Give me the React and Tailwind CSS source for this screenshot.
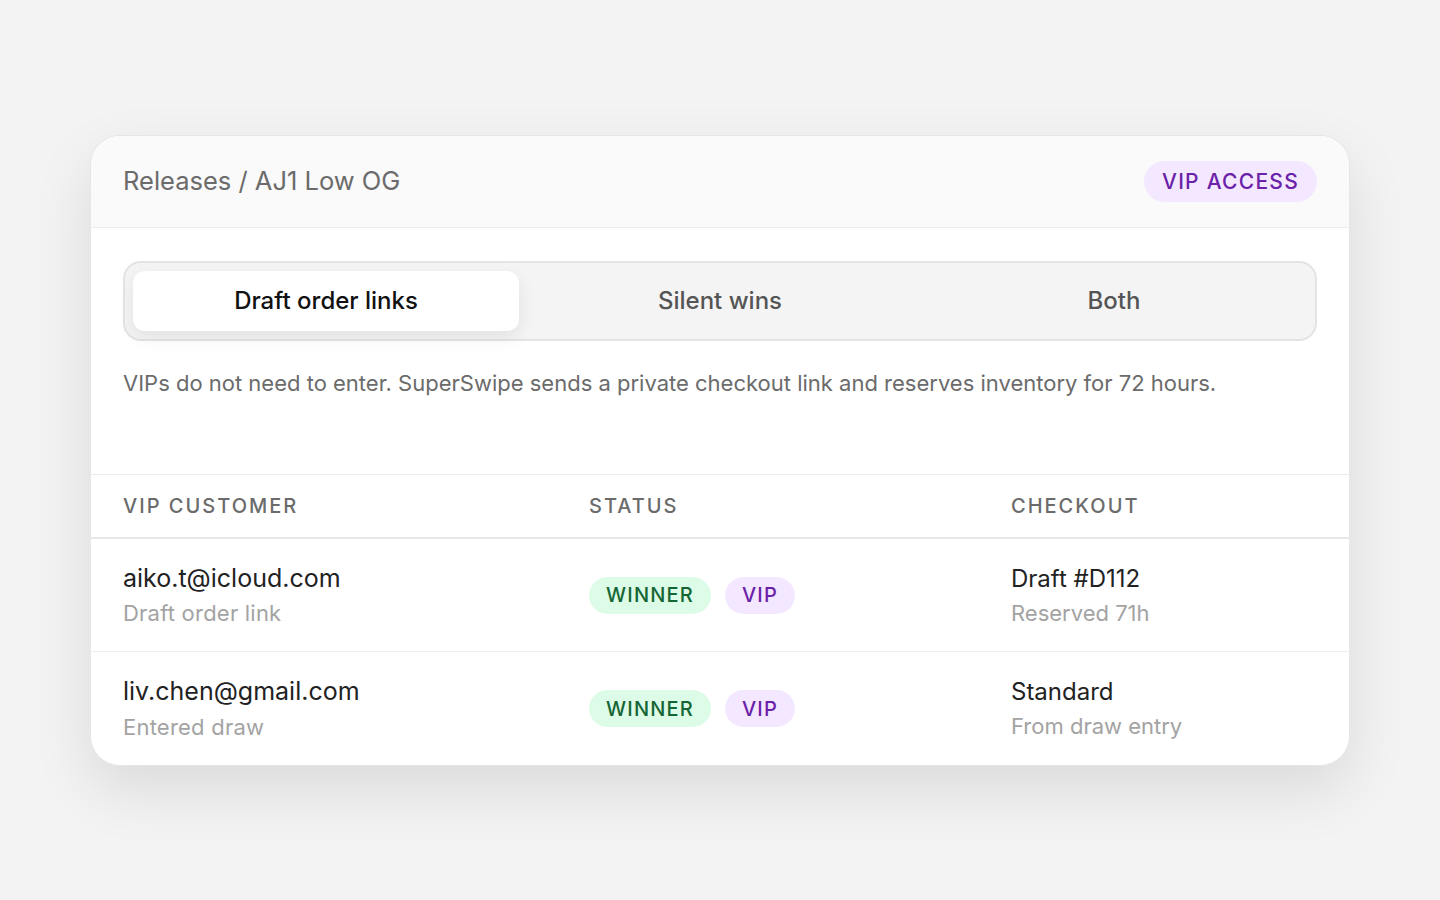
import React from "react";

const rows = [
  { email: "aiko.t@icloud.com", sub: "Draft order link", checkout: "Draft #D112", note: "Reserved 71h" },
  { email: "liv.chen@gmail.com", sub: "Entered draw", checkout: "Standard", note: "From draw entry" },
];

function Pill({ tone, children }) {
  const cls =
    tone === "green"
      ? "bg-[#dcfce7] text-[#166534]"
      : "bg-[#f3e8ff] text-[#6b21a8]";
  return (
    <span className={`inline-flex h-[37px] items-center rounded-full px-[17px] text-[20px] font-medium tracking-[0.06em] ${cls}`}>
      {children}
    </span>
  );
}

export default function App() {
  const tabs = ["Draft order links", "Silent wins", "Both"];
  return (
    <div
      className="flex min-h-[900px] w-full items-start justify-center bg-[#f3f3f3] pt-[135px]"
      style={{ fontFamily: "Inter, 'Noto Sans', sans-serif" }}
    >
      <div className="w-[1260px] overflow-hidden rounded-[30px] border border-[#e6e6e6] bg-white shadow-[0_24px_60px_rgba(0,0,0,0.10)]">
        {/* header */}
        <div className="flex h-[92px] items-center justify-between border-b border-[#ececec] bg-[#fafafa] px-[32px]">
          <div className="text-[25.5px] text-[#6b6b6b]">Releases / AJ1 Low OG</div>
          <span className="inline-flex h-[41px] items-center rounded-full bg-[#f3e8ff] px-[18px] text-[21px] font-medium tracking-[0.06em] text-[#6b21a8]">
            VIP ACCESS
          </span>
        </div>

        {/* mode switch */}
        <div className="px-[32px] pt-[33px]">
          <div className="grid h-[80px] grid-cols-3 gap-[8px] rounded-[18px] border-2 border-[#e4e4e4] bg-[#f4f4f4] p-[8px]">
            {tabs.map((t, i) => (
              <div
                key={t}
                className={
                  i === 0
                    ? "flex items-center justify-center rounded-[12px] bg-white text-[24px] font-medium text-[#111] shadow-[0_6px_18px_rgba(0,0,0,0.08)]"
                    : "flex items-center justify-center text-[24px] font-medium text-[#555]"
                }
              >
                {t}
              </div>
            ))}
          </div>
          <p className="mt-[26px] text-[22px] text-[#6b6b6b]">
            VIPs do not need to enter. SuperSwipe sends a private checkout link and reserves inventory for 72 hours.
          </p>
        </div>

        {/* table */}
        <div className="mt-[74px] border-t border-[#ececec]">
          <div className="grid h-[64px] grid-cols-[466px_422px_1fr] items-center border-b-2 border-[#e8e8e8] px-[32px] text-[20px] font-medium tracking-[0.1em] text-[#6b6b6b]">
            <div>VIP CUSTOMER</div>
            <div>STATUS</div>
            <div>CHECKOUT</div>
          </div>
          {rows.map((r, i) => (
            <div
              key={r.email}
              className={`grid h-[113px] grid-cols-[466px_422px_1fr] items-center px-[32px] ${i === 0 ? "border-b border-[#efefef]" : ""}`}
            >
              <div className="flex flex-col">
                <div className="text-[25px] text-[#222]">{r.email}</div>
                <div className="text-[22px] tracking-[0.01em] text-[#a3a3a3]">{r.sub}</div>
              </div>
              <div className="flex items-center gap-[14px]">
                <Pill tone="green">WINNER</Pill>
                <Pill tone="purple">VIP</Pill>
              </div>
              <div className="flex flex-col">
                <div className="text-[24px] text-[#222]">{r.checkout}</div>
                <div className="text-[22px] text-[#a3a3a3]">{r.note}</div>
              </div>
            </div>
          ))}
        </div>
      </div>
    </div>
  );
}
